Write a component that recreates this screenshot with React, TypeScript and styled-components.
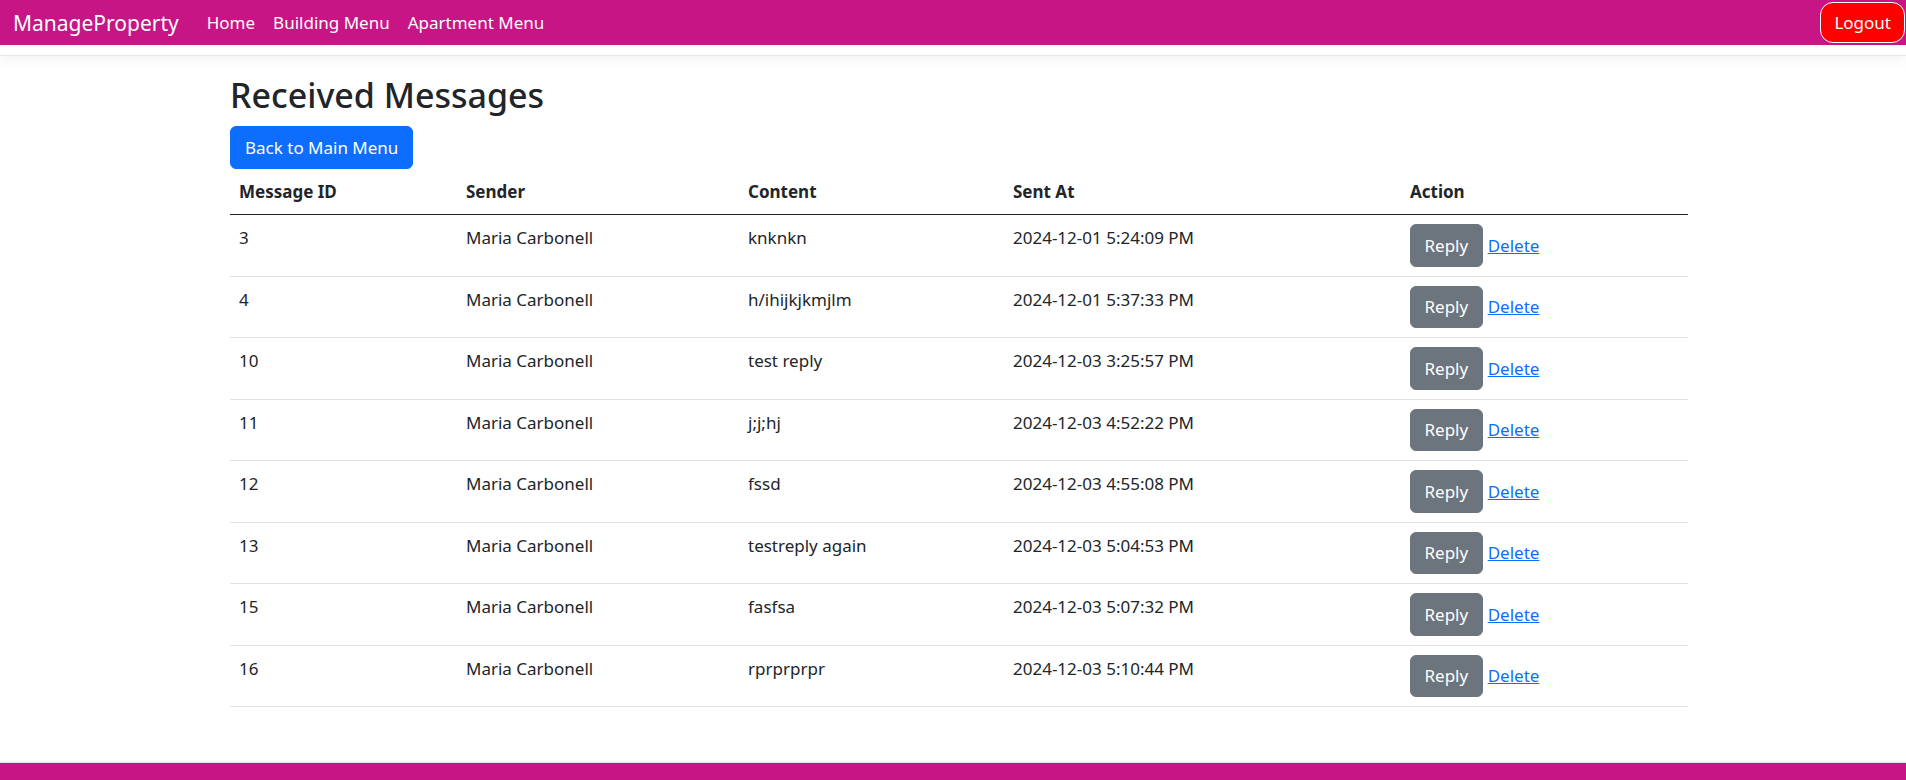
import React from 'react';
import styled, { createGlobalStyle } from 'styled-components';

const GlobalStyle = createGlobalStyle`
  *, *::before, *::after { box-sizing: border-box; }
  html, body { margin: 0; padding: 0; background: #fff; }
  body {
    font-family: "Segoe UI", "Noto Sans", "Liberation Sans", sans-serif;
    font-size: 17px;
    line-height: 27px;
    color: #212529;
  }
`;

const Page = styled.div`
  min-height: 780px;
  display: flex;
  flex-direction: column;
`;

const Header = styled.header`
  padding-bottom: 10px;
  border-bottom: 1px solid #e5e5e5;
  box-shadow: 0 4px 12px rgba(0, 0, 0, 0.05);
`;

const Navbar = styled.nav`
  height: 45px;
  background: #c71585;
  display: flex;
  align-items: center;
  padding: 0 1px 0 13px;
`;

const Brand = styled.a`
  color: #fff;
  font-size: 21px;
  line-height: 30px;
  text-decoration: none;
  margin-right: 19px;
  white-space: nowrap;
`;

const NavList = styled.ul`
  list-style: none;
  margin: 0;
  padding: 0;
  display: flex;
  flex: 1;
`;

const NavLink = styled.a`
  display: block;
  padding: 0 9px;
  color: #fff;
  font-size: 17px;
  line-height: 27px;
  text-decoration: none;
  white-space: nowrap;
`;

const LogoutButton = styled.button`
  font-family: inherit;
  font-size: 17px;
  line-height: 27px;
  color: #fff;
  background: #ff0000;
  border: 1px solid #fff;
  border-radius: 13px;
  padding: 6px 13px;
  cursor: pointer;
`;

const Main = styled.main`
  flex: 1;
  padding: 18px 218px 0 230px;
`;

const Title = styled.h2`
  margin: 0 0 9px;
  font-size: 34px;
  line-height: 43px;
  font-weight: 500;
  color: #212529;
`;

const Toolbar = styled.div`
  display: flex;
`;

const PrimaryButton = styled.a`
  display: inline-block;
  padding: 7px 14px;
  border: 1px solid #0d6efd;
  border-radius: 6px;
  background: #0d6efd;
  color: #fff;
  font-size: 17px;
  line-height: 27px;
  text-decoration: none;
`;

const Table = styled.table`
  width: 100%;
  border-collapse: collapse;
  table-layout: fixed;
`;

const HeadCell = styled.th`
  text-align: left;
  padding: 9px;
  font-weight: 700;
  line-height: 27px;
  border-bottom: 1px solid #212529;
`;

const Cell = styled.td`
  padding: 9px;
  vertical-align: top;
  line-height: 27px;
  border-bottom: 1px solid #dee2e6;
`;

const ReplyButton = styled.button`
  display: inline-block;
  font-family: inherit;
  font-size: 17px;
  line-height: 27px;
  color: #fff;
  background: #6c757d;
  border: 1px solid #6c757d;
  border-radius: 6px;
  padding: 6.75px 13.5px;
  cursor: pointer;
`;

const DeleteLink = styled.a`
  color: #0d6efd;
  text-decoration: underline;
  margin-left: 5px;
  cursor: pointer;
`;

const Footer = styled.footer`
  height: 18px;
  border-top: 1px solid #dee2e6;
  background: #c71585;
`;

const messages = [
  { id: 3, sender: 'Maria Carbonell', content: 'knknkn', sent: '2024-12-01 5:24:09 PM' },
  { id: 4, sender: 'Maria Carbonell', content: 'h/ihijkjkmjlm', sent: '2024-12-01 5:37:33 PM' },
  { id: 10, sender: 'Maria Carbonell', content: 'test reply', sent: '2024-12-03 3:25:57 PM' },
  { id: 11, sender: 'Maria Carbonell', content: 'j;j;hj', sent: '2024-12-03 4:52:22 PM' },
  { id: 12, sender: 'Maria Carbonell', content: 'fssd', sent: '2024-12-03 4:55:08 PM' },
  { id: 13, sender: 'Maria Carbonell', content: 'testreply again', sent: '2024-12-03 5:04:53 PM' },
  { id: 15, sender: 'Maria Carbonell', content: 'fasfsa', sent: '2024-12-03 5:07:32 PM' },
  { id: 16, sender: 'Maria Carbonell', content: 'rprprprpr', sent: '2024-12-03 5:10:44 PM' },
];

export default function App() {
  return (
    <Page>
      <GlobalStyle />
      <Header>
        <Navbar>
          <Brand href="#">ManageProperty</Brand>
          <NavList>
            <li><NavLink href="#">Home</NavLink></li>
            <li><NavLink href="#">Building Menu</NavLink></li>
            <li><NavLink href="#">Apartment Menu</NavLink></li>
          </NavList>
          <LogoutButton>Logout</LogoutButton>
        </Navbar>
      </Header>
      <Main>
        <Title>Received Messages</Title>
        <Toolbar>
          <PrimaryButton href="#">Back to Main Menu</PrimaryButton>
        </Toolbar>
        <Table>
          <colgroup>
            <col style={{ width: 227 }} />
            <col style={{ width: 282 }} />
            <col style={{ width: 265 }} />
            <col style={{ width: 397 }} />
            <col />
          </colgroup>
          <thead>
            <tr>
              <HeadCell>Message ID</HeadCell>
              <HeadCell>Sender</HeadCell>
              <HeadCell>Content</HeadCell>
              <HeadCell>Sent At</HeadCell>
              <HeadCell>Action</HeadCell>
            </tr>
          </thead>
          <tbody>
            {messages.map((m) => (
              <tr key={m.id}>
                <Cell>{m.id}</Cell>
                <Cell>{m.sender}</Cell>
                <Cell>{m.content}</Cell>
                <Cell>{m.sent}</Cell>
                <Cell>
                  <ReplyButton>Reply</ReplyButton>
                  <DeleteLink>Delete</DeleteLink>
                </Cell>
              </tr>
            ))}
          </tbody>
        </Table>
      </Main>
      <Footer />
    </Page>
  );
}
